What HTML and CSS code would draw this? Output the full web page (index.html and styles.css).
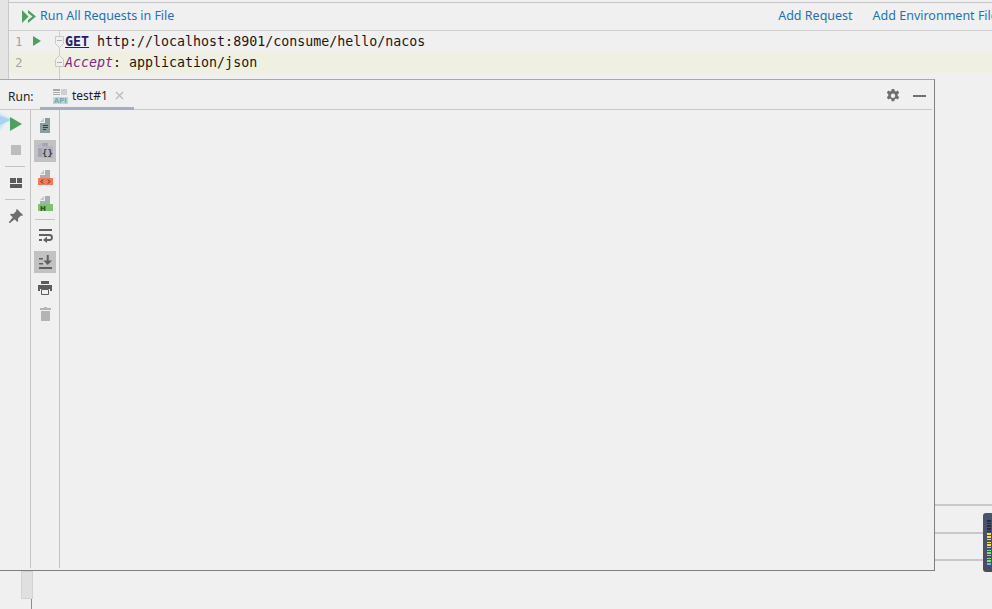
FILE: index.html
```html
<!DOCTYPE html>
<html lang="en">
<head>
<meta charset="utf-8">
<title>test.http</title>
<link rel="stylesheet" href="styles.css">
</head>
<body>
<div class="page">
  <div class="top">
    <div class="strip"></div>
    <div class="top-main">
      <div class="toolbar">
        <a class="link run-all">
          <svg class="run-icon" width="14" height="13" viewBox="0 0 14 13"><path fill="#4f9f60" d="M0 0l6.500 6.500L0 13zM6 0l8 6.500L6 13v-3l4.500-3.500L6 3z"/></svg>
          <span>Run All Requests in File</span>
        </a>
        <div class="toolbar-right">
          <a class="link">Add Request</a>
          <a class="link env">Add Environment File</a>
        </div>
      </div>
      <div class="editor">
        <div class="row">
          <div class="gutter">
            <span class="num">1</span>
            <svg class="play" width="8" height="10" viewBox="0 0 8 10"><path fill="#4f9f60" d="M0 0l8 5-8 5z"/></svg>
            <svg class="fold" width="11" height="14" viewBox="0 0 11 14"><path fill="#f0f0f0" stroke="#c8c8c8" d="M1.500 1.500h8v7l-4 4-4-4z"/><path stroke="#b0b0b0" d="M3 5.500h5"/></svg>
          </div>
          <code class="code"><b class="method">GET</b> http://localhost:8901/consume/hello/nacos</code>
        </div>
        <div class="row current">
          <div class="gutter">
            <span class="num">2</span>
            <svg class="fold fold-end" width="11" height="14" viewBox="0 0 11 14"><path fill="#f0f0f0" stroke="#c8c8c8" d="M1.500 12.500h8v-7l-4-4-4 4z"/><path stroke="#b0b0b0" d="M3 8.500h5"/></svg>
          </div>
          <code class="code"><i class="header">Accept</i>: application/json</code>
        </div>
        <div class="row tail"><div class="gutter"></div></div>
      </div>
    </div>
  </div>

  <div class="middle">
    <section class="panel">
      <header class="panel-head">
        <span class="run-label">Run:</span>
        <div class="tab">
          <svg width="15" height="16" viewBox="0 0 15 16">
            <path fill="#a9a9a9" d="M0 1h7v2H0zM0 4h7v1H0zM0 6h7v1H0z"/><path fill="#cfcfcf" d="M8 1h6v6H8z"/>
            <rect y="9" width="15" height="7" fill="#b4dde0"/>
            <text x="7.500" y="15" class="api">API</text>
          </svg>
          <span class="tab-title">test#1</span>
          <svg class="close" width="9" height="9" viewBox="0 0 9 9"><path stroke="#b9b9b9" stroke-width="1.200" d="M1 1l7 7M8 1L1 8"/></svg>
        </div>
        <div class="head-actions">
          <svg width="14" height="14" viewBox="0 0 14 14"><path fill="#6e6e6e" fill-rule="evenodd" d="M5.700 0h2.600l.4 2 1.300.6L11.800 1.500l1.400 2.300-1.500 1.400v1.600l1.500 1.400-1.400 2.300-1.800-.9-1.300.7-.4 2H5.700l-.4-2-1.300-.7-1.800.9L.8 8.200l1.500-1.400V5.200L.8 3.800l1.400-2.300L4 2.600l1.300-.6zM7 4.500a2.200 2.200 0 1 0 0 4.400 2.200 2.200 0 0 0 0-4.400z"/></svg>
          <span class="minimize"></span>
        </div>
      </header>
      <div class="panel-body">
        <aside class="rail rail-run">
          <svg class="pointer" width="16" height="22" viewBox="0 0 16 22"><path fill="#cfe5f6" stroke="#e3f0fa" stroke-width="2" d="M-3 1L15 10 6 13 1 20-3 19z"/><path fill="#a9d2f0" d="M-2 5L11 10 0 15z"/></svg>
          <div class="tool">
            <svg width="12" height="14" viewBox="0 0 12 14"><path fill="#4f9f60" d="M0 0l12 7-12 7z"/></svg>
          </div>
          <div class="tool"><span class="stop"></span></div>
          <span class="sep"></span>
          <div class="tool">
            <svg width="12" height="10" viewBox="0 0 12 10"><path fill="#5c5c5c" d="M0 0h6v5H0zM7 0h5v5H7zM0 6h12v4H0z"/></svg>
          </div>
          <span class="sep"></span>
          <div class="tool">
            <svg width="14" height="14" viewBox="0 0 14 14"><path fill="#6e6e6e" d="M8 0l6 6-1 1-1-.4-3 3 .2 2.400-1 1-2.500-2.800L1 14l-1 0 0-1 3.800-4.700L1 5.800l1-1 2.400.2 3-3L7 1z"/></svg>
          </div>
        </aside>
        <aside class="rail rail-view">
          <div class="vtool">
            <svg width="11" height="15" viewBox="0 0 11 15"><path fill="#c2c9c9" d="M0 4l4-4v4z"/><path fill="#8b9c9c" d="M5 0h5v15H0V5h5z"/><path fill="#3f3f3f" d="M3 7h5v1H3zM3 9h5v1H3zM3 11h3v1H3z"/></svg>
          </div>
          <div class="vtool on">
            <svg width="16" height="16" viewBox="0 0 16 16"><path fill="#b4b4bc" d="M0 4l4-4v4z"/><path fill="#a4a4b6" d="M5 0h6v14H1V5h4z"/><rect x="5" y="3" width="11" height="12" fill="#b4b4bc"/><text x="10.500" y="13" class="brace">{}</text></svg>
          </div>
          <div class="vtool">
            <svg width="15" height="15" viewBox="0 0 15 15"><path fill="#c2c9c9" d="M2 4l4-4v4z"/><path fill="#a3b1b1" d="M7 0h5v8H2V5h5z"/><rect y="8" width="15" height="7" fill="#f2795a"/><path fill="none" stroke="#4a2a1c" d="M5 9.500l-2 2 2 2M10 9.500l2 2-2 2"/></svg>
          </div>
          <div class="vtool">
            <svg width="15" height="15" viewBox="0 0 15 15"><path fill="#c2c9c9" d="M2 4l4-4v4z"/><path fill="#a3b1b1" d="M7 0h5v8H2V5h5z"/><rect y="8" width="15" height="7" fill="#7fc272"/><text x="2" y="14.500" class="hletter">H</text></svg>
          </div>
          <span class="sep sep-wide"></span>
          <div class="vtool">
            <svg width="15" height="14" viewBox="0 0 15 14"><path fill="#5f5f5f" d="M1 0h13v2H1zM1 10h3v2H1zM9 7.500l-4 3.500 4 3z"/><path fill="none" stroke="#5f5f5f" stroke-width="1.800" d="M1 6h10.500a2.500 2.500 0 0 1 0 5H8"/></svg>
          </div>
          <div class="vtool on">
            <svg width="14" height="14" viewBox="0 0 14 14"><path fill="#5f5f5f" d="M1 3h4v1.500H1zM1 8h4v1.500H1zM1 12h13v2H1zM8.800 0h1.900v5.500H14L9.700 10 5.500 5.500h3.300z"/></svg>
          </div>
          <div class="vtool">
            <svg width="14" height="14" viewBox="0 0 14 14"><path fill="#5c5c5c" d="M3 0h8v3H3zM0 4h14v6h-2V8H2v2H0z"/><path fill="none" stroke="#5c5c5c" d="M3.500 8.500h7v5h-7z"/></svg>
          </div>
          <div class="vtool">
            <svg width="11" height="14" viewBox="0 0 11 14"><path fill="#b4b4b4" d="M4 0h3v1h4v2H0V1h4zM1 4h9v10H1z"/></svg>
          </div>
        </aside>
        <div class="console"></div>
      </div>
    </section>
    <aside class="side">
      <span class="side-line"></span>
      <span class="side-line"></span>
      <span class="side-line"></span>
      <div class="meter">
        <span class="seg off"></span><span class="seg off"></span><span class="seg off"></span><span class="seg off"></span><span class="seg off"></span>
        <span class="seg yel"></span><span class="seg yel"></span><span class="seg yel"></span><span class="seg yel"></span><span class="seg yel"></span>
        <span class="seg grn"></span><span class="seg grn"></span><span class="seg grn"></span><span class="seg grn"></span><span class="seg grn"></span><span class="seg grn"></span>
        <span class="seg blu"></span>
      </div>
    </aside>
  </div>

  <div class="bottom">
    <div class="thumb"></div>
  </div>
</div>
</body>
</html>
```
FILE: styles.css
```css
* { box-sizing: border-box; }
html, body { margin: 0; padding: 0; }
body { background: #f0f0f0; font-family: "Noto Sans", "Open Sans", sans-serif; color: #1e1e1e; overflow: hidden; }
.page { width: 992px; height: 609px; display: flex; flex-direction: column; overflow: hidden; }

.top { display: flex; height: 79px; flex: none; }
.strip { width: 9px; background: #e4e4e4; border-right: 1px solid #c9c9c9; flex: none; }
.top-main { flex: 1; min-width: 0; padding-top: 2px; }
.toolbar { height: 29px; border-top: 1px solid #c6c6c6; border-bottom: 1px solid #cfcfcf; display: flex; align-items: center; padding: 0 0 2px 13px; white-space: nowrap; overflow: hidden; }
.link { color: #1f70c0; font-size: 12.500px; line-height: 16px; }
.run-all { display: flex; align-items: center; gap: 4px; letter-spacing: -.05px; }
.run-icon { margin-top: 1px; }
.toolbar-right { display: flex; gap: 20px; margin-left: 604px; flex: none; }

.row { display: flex; height: 21px; align-items: center; }
.row.current { background: #eff0e2; }
.row.tail { height: 6px; }
.gutter { width: 51px; height: 100%; flex: none; border-right: 1px solid #cdcdcd; position: relative; }
.num { position: absolute; left: 6px; top: 2px; font: 12.500px/18px "DejaVu Sans Mono", monospace; color: #a4a4a4; }
.play { position: absolute; left: 24px; top: 5px; }
.fold { position: absolute; left: 45px; top: 4px; }
.fold-end { top: 2px; }
.code { font: 13.300px/21px "DejaVu Sans Mono", monospace; color: #1f1610; padding-left: 5px; white-space: pre; }
.method { font-weight: 700; color: #2a1a70; text-decoration: underline; }
.header { color: #7b2b82; font-style: italic; }

.middle { display: flex; height: 492px; flex: none; position: relative; }
.panel { width: 935px; flex: none; border-top: 1px solid #a8a8a8; border-right: 1px solid #7f7f7f; border-bottom: 1px solid #7f7f7f; display: flex; flex-direction: column; position: relative; overflow: hidden; }
.panel-head { height: 30px; flex: none; display: flex; align-items: stretch; border-bottom: 1px solid #c9c9c9; padding-left: 8px; margin-right: 2px; }
.run-label { font-size: 12px; line-height: 34px; width: 32px; flex: none; }
.tab { width: 94px; display: flex; align-items: center; gap: 4px; padding: 4px 0 0 13px; border-bottom: 3px solid #a0afc2; height: 30px; }
.tab-title { font-size: 12px; line-height: 16px; padding-top: 1px; }
.close { margin-left: 3px; }
.api { font: 700 6.800px "DejaVu Sans", sans-serif; text-anchor: middle; fill: #84a4aa; }
.head-actions { margin-left: auto; display: flex; align-items: center; gap: 13px; padding: 2px 6px 0 0; }
.minimize { width: 13px; height: 2px; background: #707070; display: block; }

.panel-body { flex: 1; display: flex; min-height: 0; padding-bottom: 1px; }
.rail { display: flex; flex-direction: column; align-items: center; flex: none; border-right: 1px solid #c4c4c4; margin-bottom: 1px; }
.rail-run { width: 31px; padding: 1px 0 0 2px; position: relative; }
.rail-view { width: 29px; padding: 4px 0 0 0; }
.tool { width: 24px; height: 26px; display: flex; align-items: center; justify-content: center; flex: none; position: relative; }
.stop { width: 10px; height: 10px; background: #bdbdbd; display: block; }
.sep { width: 20px; height: 1px; background: #c4c4c4; margin: 3px 0; flex: none; }
.rail-run .sep { margin-left: -2px; }
.sep-wide { margin: 1px 0 5px; }
.vtool { width: 22px; height: 22px; margin-bottom: 4px; display: flex; align-items: center; justify-content: center; flex: none; }
.vtool.on { background: #c2c2c2; }
.brace { font: 700 9px "DejaVu Sans Mono", monospace; fill: #3c3c3c; text-anchor: middle; }
.hletter { font: 700 7px "DejaVu Sans", sans-serif; fill: #2c4a22; }
.console { flex: 1; }
.pointer { position: absolute; left: 0; top: 0; }

.side { flex: 1; display: flex; flex-direction: column; position: relative; padding-top: 425px; gap: 25.500px; }
.side-line { display: block; height: 2px; background: #c8c8c8; flex: none; }
.meter { position: absolute; left: 48px; top: 434px; width: 12px; height: 59px; border-radius: 3px; background: linear-gradient(#47566e, #4e4a60); padding: 7px 0 0 4px; display: flex; flex-direction: column; gap: 1.200px; }
.seg { display: block; width: 4px; height: 1.500px; flex: none; }
.off { background: #2a2e3a; }
.yel { background: #f0dc50; }
.grn { background: #86dc86; }
.blu { background: #5fbcf0; }

.bottom { flex: 1; position: relative; display: flex; }
.thumb { width: 32px; height: 100%; border-right: 1px solid #8c8c8c; }
.thumb::before { content: ""; display: block; margin-left: 21px; width: 10px; height: 26px; background: #e0e0e0; border: 1px solid #d2d2d2; }
```
